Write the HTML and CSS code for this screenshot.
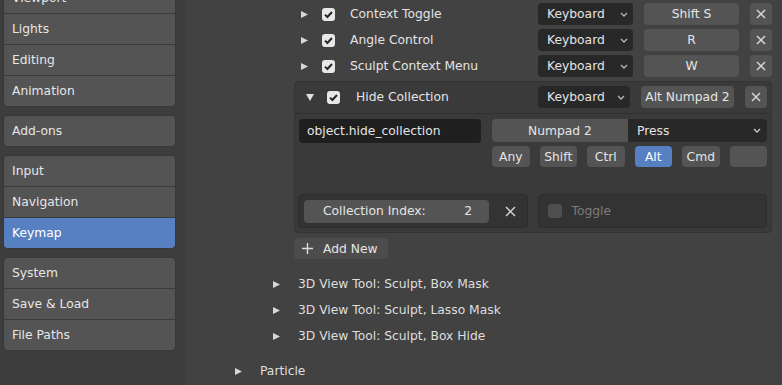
FILE: index.html
```html
<!DOCTYPE html>
<html lang="en">
<head>
  <meta charset="UTF-8" />
  <title>Preferences - Keymap</title>
  <link rel="stylesheet" href="styles.css">
</head>
<body>
<nav class="sidebar">
  <div class="group first">
    <div class="nav-item">Viewport</div>
    <div class="nav-item">Lights</div>
    <div class="nav-item">Editing</div>
    <div class="nav-item">Animation</div>
  </div>
  <div class="group">
    <div class="nav-item">Add-ons</div>
  </div>
  <div class="group">
    <div class="nav-item">Input</div>
    <div class="nav-item">Navigation</div>
    <div class="nav-item active">Keymap</div>
  </div>
  <div class="group">
    <div class="nav-item">System</div>
    <div class="nav-item">Save &amp; Load</div>
    <div class="nav-item">File Paths</div>
  </div>
</nav>

<main class="main">
  <div class="kmi">
    <span class="tri"><svg width="7" height="7" viewBox="0 0 7 7"><path d="M0 0L7 3.5L0 7Z" fill="#d8d8d8"/></svg></span>
    <span class="check"><svg width="13" height="13" viewBox="0 0 13 13"><rect width="13" height="13" rx="3" fill="#e8e8e8"/><path d="M3 6.6L5.4 9L10 4" stroke="#262626" stroke-width="2" fill="none"/></svg></span>
    <span class="kmi-name">Context Toggle</span>
    <div class="dropdown">Keyboard<svg width="8" height="5" viewBox="0 0 8 5"><path d="M1 1L4 4L7 1" stroke="#b8b8b8" stroke-width="1.3" fill="none"/></svg></div>
    <div class="btn key">Shift S</div>
    <div class="btn xbtn"><svg width="10" height="10" viewBox="0 0 10 10"><path d="M1 1L9 9M9 1L1 9" stroke="#d6d6d6" stroke-width="1.5"/></svg></div>
  </div>
  <div class="kmi">
    <span class="tri"><svg width="7" height="7" viewBox="0 0 7 7"><path d="M0 0L7 3.5L0 7Z" fill="#d8d8d8"/></svg></span>
    <span class="check"><svg width="13" height="13" viewBox="0 0 13 13"><rect width="13" height="13" rx="3" fill="#e8e8e8"/><path d="M3 6.6L5.4 9L10 4" stroke="#262626" stroke-width="2" fill="none"/></svg></span>
    <span class="kmi-name">Angle Control</span>
    <div class="dropdown">Keyboard<svg width="8" height="5" viewBox="0 0 8 5"><path d="M1 1L4 4L7 1" stroke="#b8b8b8" stroke-width="1.3" fill="none"/></svg></div>
    <div class="btn key">R</div>
    <div class="btn xbtn"><svg width="10" height="10" viewBox="0 0 10 10"><path d="M1 1L9 9M9 1L1 9" stroke="#d6d6d6" stroke-width="1.5"/></svg></div>
  </div>
  <div class="kmi">
    <span class="tri"><svg width="7" height="7" viewBox="0 0 7 7"><path d="M0 0L7 3.5L0 7Z" fill="#d8d8d8"/></svg></span>
    <span class="check"><svg width="13" height="13" viewBox="0 0 13 13"><rect width="13" height="13" rx="3" fill="#e8e8e8"/><path d="M3 6.6L5.4 9L10 4" stroke="#262626" stroke-width="2" fill="none"/></svg></span>
    <span class="kmi-name">Sculpt Context Menu</span>
    <div class="dropdown">Keyboard<svg width="8" height="5" viewBox="0 0 8 5"><path d="M1 1L4 4L7 1" stroke="#b8b8b8" stroke-width="1.3" fill="none"/></svg></div>
    <div class="btn key">W</div>
    <div class="btn xbtn"><svg width="10" height="10" viewBox="0 0 10 10"><path d="M1 1L9 9M9 1L1 9" stroke="#d6d6d6" stroke-width="1.5"/></svg></div>
  </div>

  <div class="kmi-box">
    <div class="kmi kmi-head">
      <span class="tri"><svg width="8" height="7" viewBox="0 0 8 7"><path d="M0 0H8L4 7Z" fill="#e0e0e0"/></svg></span>
      <span class="check"><svg width="13" height="13" viewBox="0 0 13 13"><rect width="13" height="13" rx="3" fill="#e8e8e8"/><path d="M3 6.6L5.4 9L10 4" stroke="#262626" stroke-width="2" fill="none"/></svg></span>
      <span class="kmi-name">Hide Collection</span>
      <div class="dropdown">Keyboard<svg width="8" height="5" viewBox="0 0 8 5"><path d="M1 1L4 4L7 1" stroke="#b8b8b8" stroke-width="1.3" fill="none"/></svg></div>
      <div class="btn key">Alt Numpad 2</div>
      <div class="btn xbtn"><svg width="10" height="10" viewBox="0 0 10 10"><path d="M1 1L9 9M9 1L1 9" stroke="#d6d6d6" stroke-width="1.5"/></svg></div>
    </div>
    <div class="kmi-body">
      <div class="body-top">
        <div class="idname">object.hide_collection</div>
        <div class="key-col">
          <div class="keytype">
            <span class="numpad">Numpad 2</span>
            <span class="press">Press<svg width="8" height="5" viewBox="0 0 8 5"><path d="M1 1L4 4L7 1" stroke="#c8c8c8" stroke-width="1.3" fill="none"/></svg></span>
          </div>
          <div class="mods">
            <div class="btn mod">Any</div>
            <div class="btn mod">Shift</div>
            <div class="btn mod">Ctrl</div>
            <div class="btn mod on">Alt</div>
            <div class="btn mod">Cmd</div>
            <div class="btn mod"></div>
          </div>
        </div>
      </div>
      <div class="props">
        <div class="prop-box">
          <div class="num-field"><span>Collection Index:</span><span>2</span></div>
          <span class="prop-x"><svg width="11" height="11" viewBox="0 0 11 11"><path d="M1 1L10 10M10 1L1 10" stroke="#d0d0d0" stroke-width="1.5"/></svg></span>
        </div>
        <div class="prop-box disabled">
          <span class="check-off"></span>
          <span>Toggle</span>
        </div>
      </div>
    </div>
  </div>

  <div class="btn add-new">
    <svg width="11" height="11" viewBox="0 0 11 11"><path d="M5.5 0V11M0 5.5H11" stroke="#dcdcdc" stroke-width="1.4"/></svg>
    <span>Add New</span>
  </div>

  <div class="km-row sub">
    <span class="tri"><svg width="7" height="7" viewBox="0 0 7 7"><path d="M0 0L7 3.5L0 7Z" fill="#d8d8d8"/></svg></span>
    <span>3D View Tool: Sculpt, Box Mask</span>
  </div>
  <div class="km-row sub">
    <span class="tri"><svg width="7" height="7" viewBox="0 0 7 7"><path d="M0 0L7 3.5L0 7Z" fill="#d8d8d8"/></svg></span>
    <span>3D View Tool: Sculpt, Lasso Mask</span>
  </div>
  <div class="km-row sub">
    <span class="tri"><svg width="7" height="7" viewBox="0 0 7 7"><path d="M0 0L7 3.5L0 7Z" fill="#d8d8d8"/></svg></span>
    <span>3D View Tool: Sculpt, Box Hide</span>
  </div>
  <div class="km-row top">
    <span class="tri"><svg width="7" height="7" viewBox="0 0 7 7"><path d="M0 0L7 3.5L0 7Z" fill="#d8d8d8"/></svg></span>
    <span>Particle</span>
  </div>
</main>
</body>
</html>
```

FILE: styles.css
```css
* { box-sizing: border-box; }
body {
  margin: 0;
  height: 385px;
  overflow: hidden;
  display: flex;
  font-family: 'DejaVu Sans', sans-serif;
  font-size: 12.3px;
  color: #e4e4e4;
  background: #424242;
}
.sidebar {
  width: 185px;
  flex-shrink: 0;
  background: #3d3d3d;
  padding: 0 10px 0 4px;
}
.group {
  background: #545454;
  border-radius: 4px;
  overflow: hidden;
  margin-bottom: 10px;
  box-shadow: 0 0 0 1px #383838;
}
.group.first {
  margin-top: -17px;
}
.nav-item {
  height: 30px;
  line-height: 30px;
  padding-left: 8px;
  color: #e6e6e6;
}
.nav-item + .nav-item {
  border-top: 1px solid #3b3b3b;
  height: 31px;
}
.nav-item.active {
  background: #5680c2;
  color: #fff;
}
.main {
  flex: 1;
  padding: 3px 10px 0 0;
}
.kmi {
  display: flex;
  align-items: center;
  height: 22px;
  margin: 0 0 4px 109px;
}
.tri {
  display: flex;
  margin-left: 7px;
  width: 7px;
}
.check {
  display: flex;
  margin-left: 14px;
}
.kmi-name {
  flex: 1;
  margin-left: 15px;
  white-space: nowrap;
}
.dropdown {
  width: 95px;
  height: 22px;
  background: #282828;
  border-radius: 4px;
  display: flex;
  align-items: center;
  justify-content: space-between;
  padding: 0 5px 0 9px;
}
.btn {
  background: #545454;
  border-radius: 4px;
  height: 22px;
  display: flex;
  align-items: center;
  justify-content: center;
}
.key {
  width: 95px;
  margin-left: 11px;
}
.xbtn {
  width: 22px;
  margin-left: 11px;
}
.kmi-box {
  margin-left: 109px;
  background: #3a3a3a;
  border: 1px solid #333;
  border-radius: 4px;
}
.kmi-head {
  margin: 0;
  height: auto;
  padding: 4px 4px 5px;
  border-bottom: 1px solid #303030;
}
.kmi-head .tri { width: 8px; }
.kmi-head .check { margin-left: 13px; }
.kmi-head .kmi-name { margin-left: 16px; }
.kmi-head .dropdown { width: 92px; }
.kmi-head .key { width: 93px; }
.kmi-body {
  padding: 5px 4px 4px;
}
.body-top {
  display: grid;
  grid-template-columns: 182px 1fr;
  gap: 11px;
}
.idname {
  height: 24px;
  background: #1f1f1f;
  border-radius: 4px;
  display: flex;
  align-items: center;
  padding-left: 8px;
}
.keytype {
  display: flex;
  height: 23px;
  border-radius: 4px;
  overflow: hidden;
}
.numpad {
  width: 136px;
  background: #545454;
  display: flex;
  align-items: center;
  justify-content: center;
}
.press {
  flex: 1;
  background: #282828;
  display: flex;
  align-items: center;
  justify-content: space-between;
  padding: 0 6px 0 9px;
}
.mods {
  display: grid;
  grid-template-columns: repeat(6, 1fr);
  gap: 10px;
  margin-top: 4px;
}
.mod {
  height: 21px;
}
.mod.on {
  background: #5680c2;
  color: #fff;
}
.props {
  display: grid;
  grid-template-columns: 1fr 1fr;
  gap: 10px;
  margin: 27px 0 0 -1px;
}
.prop-box {
  height: 34px;
  background: #333;
  border: 1px solid #2d2d2d;
  border-radius: 4px;
  display: flex;
  align-items: center;
  padding: 0 5px;
}
.num-field {
  width: 185px;
  height: 23px;
  background: #545454;
  border-radius: 4px;
  display: flex;
  align-items: center;
  justify-content: space-between;
  padding: 0 17px 0 19px;
}
.prop-x {
  display: flex;
  margin-left: 16px;
}
.prop-box.disabled {
  color: #7c7c7c;
  padding-left: 9px;
}
.check-off {
  width: 14px;
  height: 14px;
  background: #4f4f4f;
  border-radius: 3px;
  margin-right: 10px;
}
.add-new {
  width: 94px;
  height: 21px;
  margin: 5px 0 0 109px;
  background: #4c4c4c;
  justify-content: flex-start;
  padding-left: 8px;
}
.add-new span {
  margin-left: 10px;
}
.km-row {
  display: flex;
  align-items: center;
  height: 22px;
  margin-bottom: 4px;
  color: #dedede;
}
.km-row .tri { margin-left: 0; }
.km-row span + span { margin-left: 18px; }
.km-row.sub { margin-left: 88px; }
.add-new + .km-row { margin-top: 14px; }
.km-row.top {
  margin: 13px 0 0 50px;
}
```
